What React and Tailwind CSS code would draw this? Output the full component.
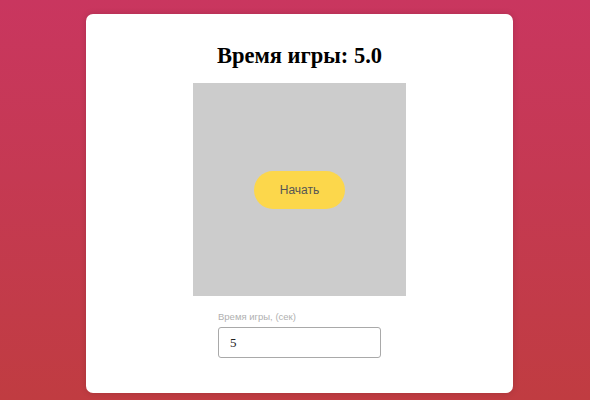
import React from 'react';

export default function App() {
  return (
    <div className="w-[590px] h-[400px] overflow-hidden bg-gradient-to-b from-[#c9365f] to-[#c03c41] pt-[14px]">
      <div className="ml-[86px] w-[427px] h-[379px] bg-white rounded-[7px] shadow-[0_0_6px_rgba(0,0,0,0.15)] flex flex-col items-center pt-[28px]">
        <h1 className="text-[22.5px] leading-[28px] font-bold text-black" style={{ fontFamily: '"Liberation Serif", serif' }}>
          Время игры: 5.0
        </h1>
        <div className="mt-[13px] w-[213px] h-[213px] bg-[#cccccc] flex items-center justify-center">
          <button className="w-[91px] h-[38px] rounded-full bg-[#fcd74b] text-[12px] text-[#555] font-['Liberation_Sans',sans-serif]">
            Начать
          </button>
        </div>
        <div className="mt-[14px] w-[163px] flex flex-col">
          <label className="text-[9.5px] leading-[13px] text-[#b0b0b0] font-['Liberation_Sans',sans-serif]">Время игры, (сек)</label>
          <input
            defaultValue="5"
            style={{ fontFamily: '"Liberation Serif", serif' }}
            className="mt-[4px] w-[163px] h-[31px] border border-[#a9a9a9] rounded-[3px] px-[11px] text-[13px] text-[#222] outline-none"
          />
        </div>
      </div>
    </div>
  );
}
